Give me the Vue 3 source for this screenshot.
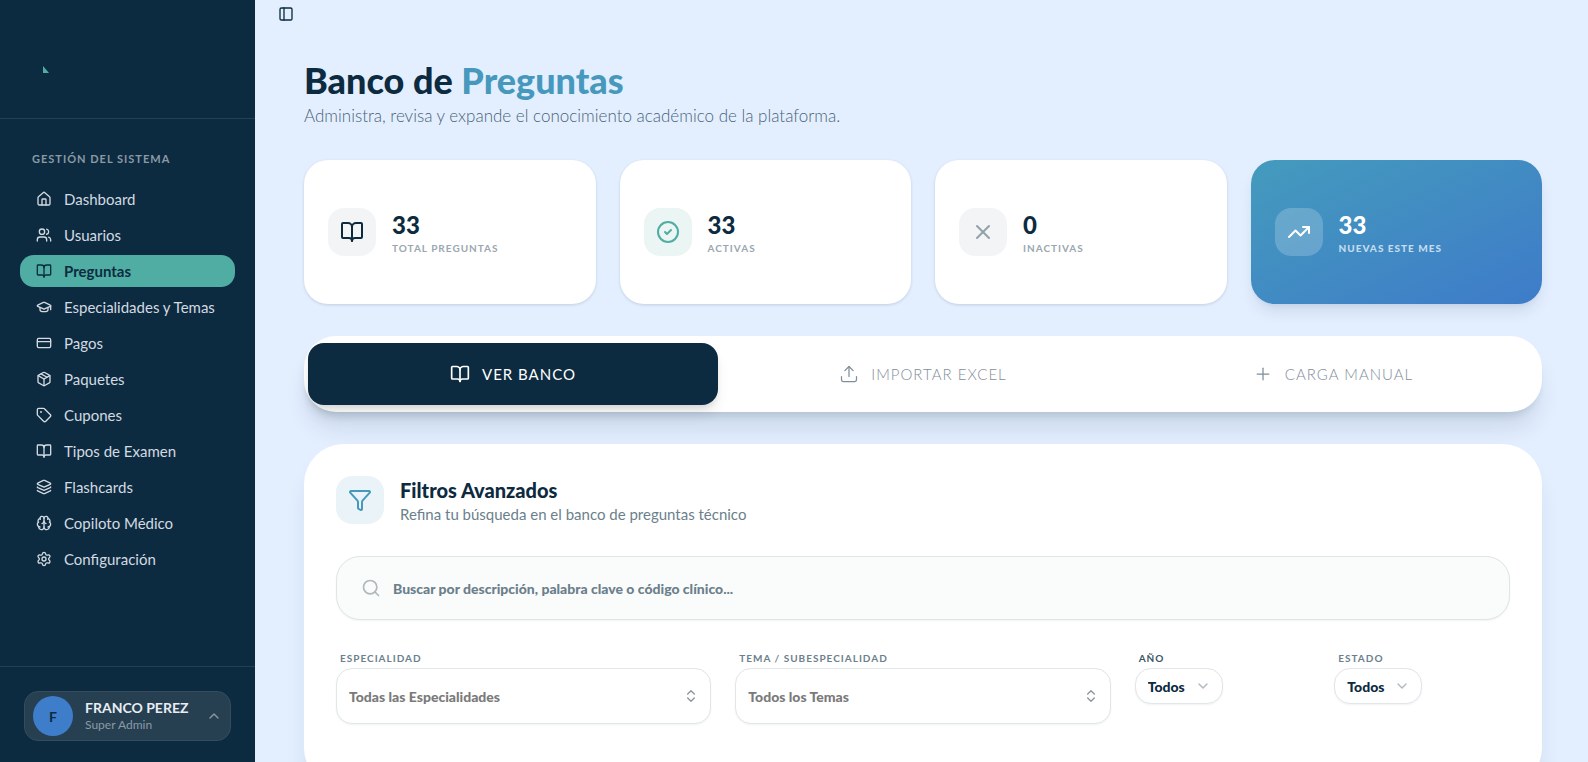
<script setup>
import { ref } from 'vue'

const icons = {
  panel: ['M5 3h14a2 2 0 0 1 2 2v14a2 2 0 0 1-2 2H5a2 2 0 0 1-2-2V5a2 2 0 0 1 2-2z', 'M9 3v18'],
  home: [
    'M15 21v-8a1 1 0 0 0-1-1h-4a1 1 0 0 0-1 1v8',
    'M3 10a2 2 0 0 1 .709-1.528l7-5.999a2 2 0 0 1 2.582 0l7 5.999A2 2 0 0 1 21 10v9a2 2 0 0 1-2 2H5a2 2 0 0 1-2-2z'
  ],
  users: [
    'M16 21v-2a4 4 0 0 0-4-4H6a4 4 0 0 0-4 4v2',
    'M5 7a4 4 0 1 0 8 0a4 4 0 1 0-8 0',
    'M22 21v-2a4 4 0 0 0-3-3.87',
    'M16 3.128a4 4 0 0 1 0 7.744'
  ],
  book: [
    'M12 7v14',
    'M3 18a1 1 0 0 1-1-1V4a1 1 0 0 1 1-1h5a4 4 0 0 1 4 4 4 4 0 0 1 4-4h5a1 1 0 0 1 1 1v13a1 1 0 0 1-1 1h-6a3 3 0 0 0-3 3 3 3 0 0 0-3-3z'
  ],
  cap: [
    'M21.42 10.922a1 1 0 0 0-.019-1.838L12.83 5.18a2 2 0 0 0-1.66 0L2.6 9.08a1 1 0 0 0 0 1.832l8.57 3.908a2 2 0 0 0 1.66 0z',
    'M22 10v6',
    'M6 12.5V16a6 3 0 0 0 12 0v-3.5'
  ],
  card: ['M4 5h16a2 2 0 0 1 2 2v10a2 2 0 0 1-2 2H4a2 2 0 0 1-2-2V7a2 2 0 0 1 2-2z', 'M2 10h20'],
  box: [
    'M11 21.73a2 2 0 0 0 2 0l7-4A2 2 0 0 0 21 16V8a2 2 0 0 0-1-1.73l-7-4a2 2 0 0 0-2 0l-7 4A2 2 0 0 0 3 8v8a2 2 0 0 0 1 1.73z',
    'M12 22V12',
    'M3.29 7 12 12l8.71-5',
    'm7.5 4.27 9 5.15'
  ],
  tag: [
    'M12.586 2.586A2 2 0 0 0 11.172 2H4a2 2 0 0 0-2 2v7.172a2 2 0 0 0 .586 1.414l8.704 8.704a2.426 2.426 0 0 0 3.42 0l6.58-6.58a2.426 2.426 0 0 0 0-3.42z',
    'M7 7.5a.5.5 0 1 0 1 0a.5.5 0 1 0-1 0'
  ],
  layers: [
    'M12.83 2.18a2 2 0 0 0-1.66 0L2.6 6.08a1 1 0 0 0 0 1.83l8.58 3.91a2 2 0 0 0 1.66 0l8.58-3.9a1 1 0 0 0 0-1.83z',
    'M2 12a1 1 0 0 0 .58.91l8.6 3.91a2 2 0 0 0 1.65 0l8.58-3.9A1 1 0 0 0 22 12',
    'M2 17a1 1 0 0 0 .58.91l8.6 3.91a2 2 0 0 0 1.65 0l8.58-3.9A1 1 0 0 0 22 17'
  ],
  brain: [
    'M12 18V5',
    'M15 13a4.17 4.17 0 0 1-3-4 4.17 4.17 0 0 1-3 4',
    'M17.598 6.5A3 3 0 1 0 12 5a3 3 0 1 0-5.598 1.5',
    'M17.997 5.125a4 4 0 0 1 2.526 5.77',
    'M18 18a4 4 0 0 0 2-7.464',
    'M19.967 17.483A4 4 0 1 1 12 18a4 4 0 1 1-7.967-.517',
    'M6 18a4 4 0 0 1-2-7.464',
    'M6.003 5.125a4 4 0 0 0-2.526 5.77'
  ],
  gear: [
    'M9.671 4.136a2.34 2.34 0 0 1 4.659 0 2.34 2.34 0 0 0 3.319 1.915 2.34 2.34 0 0 1 2.33 4.033 2.34 2.34 0 0 0 0 3.831 2.34 2.34 0 0 1-2.33 4.033 2.34 2.34 0 0 0-3.319 1.915 2.34 2.34 0 0 1-4.659 0 2.34 2.34 0 0 0-3.32-1.915 2.34 2.34 0 0 1-2.33-4.033 2.34 2.34 0 0 0 0-3.831A2.34 2.34 0 0 1 6.35 6.051a2.34 2.34 0 0 0 3.319-1.915',
    'M9 12a3 3 0 1 0 6 0a3 3 0 1 0-6 0'
  ],
  check: ['M2 12a10 10 0 1 0 20 0a10 10 0 1 0-20 0', 'm9 12 2 2 4-4'],
  close: ['M18 6 6 18', 'm6 6 12 12'],
  trend: ['M16 7h6v6', 'm22 7-8.5 8.5-5-5L2 17'],
  upload: ['M12 3v12', 'm17 8-5-5-5 5', 'M21 15v4a2 2 0 0 1-2 2H5a2 2 0 0 1-2-2v-4'],
  plus: ['M5 12h14', 'M12 5v14'],
  funnel: [
    'M10 20a1 1 0 0 0 .553.895l2 1A1 1 0 0 0 14 21v-7a2 2 0 0 1 .517-1.341L21.74 4.67A1 1 0 0 0 21 3H3a1 1 0 0 0-.742 1.67l7.225 7.989A2 2 0 0 1 10 14z'
  ],
  search: ['m21 21-4.34-4.34', 'M3 11a8 8 0 1 0 16 0a8 8 0 1 0-16 0'],
  up: ['m18 15-6-6-6 6'],
  down: ['m6 9 6 6 6-6'],
  updown: ['m7 15 5 5 5-5', 'm7 9 5-5 5 5']
}

const menu = [
  { label: 'Dashboard', icon: 'home' },
  { label: 'Usuarios', icon: 'users' },
  { label: 'Preguntas', icon: 'book' },
  { label: 'Especialidades y Temas', icon: 'cap' },
  { label: 'Pagos', icon: 'card' },
  { label: 'Paquetes', icon: 'box' },
  { label: 'Cupones', icon: 'tag' },
  { label: 'Tipos de Examen', icon: 'book' },
  { label: 'Flashcards', icon: 'layers' },
  { label: 'Copiloto Médico', icon: 'brain' },
  { label: 'Configuración', icon: 'gear' }
]

const stats = [
  { value: 33, label: 'Total preguntas', icon: 'book', tone: 'navy' },
  { value: 33, label: 'Activas', icon: 'check', tone: 'green' },
  { value: 0, label: 'Inactivas', icon: 'close', tone: 'gray' },
  { value: 33, label: 'Nuevas este mes', icon: 'trend', tone: 'accent' }
]

const tabs = [
  { id: 'banco', label: 'Ver banco', icon: 'book' },
  { id: 'excel', label: 'Importar Excel', icon: 'upload' },
  { id: 'manual', label: 'Carga manual', icon: 'plus' }
]

const filters = [
  { id: 'especialidad', label: 'Especialidad', option: 'Todas las Especialidades', wide: true },
  { id: 'tema', label: 'Tema / Subespecialidad', option: 'Todos los Temas', wide: true },
  { id: 'anio', label: 'Año', option: 'Todos', dark: true },
  { id: 'estado', label: 'Estado', option: 'Todos' }
]

const activePage = ref('Preguntas')
const activeTab = ref('banco')
const search = ref('')
const collapsed = ref(false)
</script>

<template>
  <div class="layout">
    <aside v-show="!collapsed" class="sidebar">
      <div class="brand">
        <svg class="logo" viewBox="0 0 6 7"><path d="M0 0 6 7H0z" /></svg>
      </div>
      <nav class="nav">
        <h2 class="nav-title">Gestión del sistema</h2>
        <a
          v-for="item in menu"
          :key="item.label"
          href="#"
          class="nav-item"
          :class="{ active: item.label === activePage }"
          @click.prevent="activePage = item.label"
        >
          <svg class="icon icon-sm" viewBox="0 0 24 24"><path v-for="d in icons[item.icon]" :key="d" :d="d" /></svg>
          <span>{{ item.label }}</span>
        </a>
      </nav>
      <div class="sidebar-footer">
        <button type="button" class="user">
          <span class="avatar">F</span>
          <span class="user-info">
            <span class="user-name">FRANCO PEREZ</span>
            <span class="user-role">Super Admin</span>
          </span>
          <svg class="icon icon-sm" viewBox="0 0 24 24"><path v-for="d in icons.up" :key="d" :d="d" /></svg>
        </button>
      </div>
    </aside>

    <main class="main">
      <header class="topbar">
        <button type="button" class="toggle" aria-label="Menú" @click="collapsed = !collapsed">
          <svg class="icon icon-sm" viewBox="0 0 24 24"><path v-for="d in icons.panel" :key="d" :d="d" /></svg>
        </button>
      </header>

      <div class="content">
        <div class="heading">
          <h1>Banco de <span>Preguntas</span></h1>
          <p>Administra, revisa y expande el conocimiento académico de la plataforma.</p>
        </div>

        <section class="stats">
          <article v-for="stat in stats" :key="stat.label" class="stat" :class="stat.tone">
            <div class="tile">
              <svg class="icon icon-lg" viewBox="0 0 24 24"><path v-for="d in icons[stat.icon]" :key="d" :d="d" /></svg>
            </div>
            <div>
              <div class="stat-value">{{ stat.value }}</div>
              <div class="stat-label">{{ stat.label }}</div>
            </div>
          </article>
        </section>

        <div class="tabs">
          <button
            v-for="tab in tabs"
            :key="tab.id"
            type="button"
            class="tab"
            :class="{ active: tab.id === activeTab }"
            @click="activeTab = tab.id"
          >
            <svg class="icon icon-md" viewBox="0 0 24 24"><path v-for="d in icons[tab.icon]" :key="d" :d="d" /></svg>
            <span>{{ tab.label }}</span>
          </button>
        </div>

        <section class="panel">
          <div class="panel-head">
            <div class="tile">
              <svg class="icon icon-lg" viewBox="0 0 24 24"><path v-for="d in icons.funnel" :key="d" :d="d" /></svg>
            </div>
            <div>
              <h2>Filtros Avanzados</h2>
              <p>Refina tu búsqueda en el banco de preguntas técnico</p>
            </div>
          </div>

          <label class="search">
            <svg class="icon icon-md" viewBox="0 0 24 24"><path v-for="d in icons.search" :key="d" :d="d" /></svg>
            <input
              v-model="search"
              type="text"
              aria-label="Buscar"
              placeholder="Buscar por descripción, palabra clave o código clínico..."
            />
          </label>

          <div class="filters">
            <div v-for="filter in filters" :key="filter.id" class="field" :class="{ wide: filter.wide, dark: filter.dark }">
              <label :for="filter.id">{{ filter.label }}</label>
              <div class="select">
                <select :id="filter.id">
                  <option>{{ filter.option }}</option>
                </select>
                <svg class="icon icon-sm" viewBox="0 0 24 24">
                  <path v-for="d in icons[filter.wide ? 'updown' : 'down']" :key="d" :d="d" />
                </svg>
              </div>
            </div>
          </div>
        </section>
      </div>
    </main>
  </div>
</template>

<style>
body {
  margin: 0;
  background: #e3efff;
}
</style>

<style scoped>
.layout {
  display: flex;
  height: 100vh;
  overflow: hidden;
  background: #e3efff;
  color: #0d2b40;
  font-family: Lato, 'Open Sans', sans-serif;
}

h1,
h2,
p {
  margin: 0;
}

button,
input,
select {
  font-family: inherit;
  color: inherit;
}

button {
  border: none;
  cursor: pointer;
}

.icon {
  flex-shrink: 0;
  fill: none;
  stroke: currentColor;
  stroke-width: 2;
  stroke-linecap: round;
  stroke-linejoin: round;
}

.icon-sm {
  width: 16px;
  height: 16px;
}

.icon-md {
  width: 20px;
  height: 20px;
}

.icon-lg {
  width: 24px;
  height: 24px;
}

.sidebar {
  display: flex;
  flex-direction: column;
  flex-shrink: 0;
  width: 255px;
  background: #0d2b40;
  color: #d3dae0;
}

.brand {
  box-sizing: border-box;
  height: 119px;
  padding: 66px 43px 0;
  border-bottom: 1px solid #25404f;
}

.logo {
  display: block;
  width: 6px;
  height: 7px;
  fill: #4fada3;
}

.nav {
  display: flex;
  flex: 1;
  flex-direction: column;
  gap: 4px;
  padding: 24px 20px;
}

.nav-title {
  margin-bottom: 4px;
  padding: 0 12px;
  font-size: 11px;
  font-weight: 700;
  line-height: 32px;
  letter-spacing: 1px;
  text-transform: uppercase;
  color: #8a9aa5;
}

.nav-item {
  display: flex;
  align-items: center;
  gap: 12px;
  height: 32px;
  padding: 0 16px;
  border-radius: 14px;
  font-size: 15px;
  color: inherit;
  text-decoration: none;
  white-space: nowrap;
}

.nav-item.active {
  background: #4fada3;
  color: #0d2b40;
  font-weight: 700;
}

.sidebar-footer {
  padding: 24px 24px 21px;
  border-top: 1px solid #25404f;
}

.user {
  display: flex;
  align-items: center;
  gap: 12px;
  width: 100%;
  height: 50px;
  padding: 0 8px;
  border: 1px solid #344c5c;
  border-radius: 14px;
  background: #264052;
  color: #8a9aa5;
  text-align: left;
}

.avatar {
  display: flex;
  align-items: center;
  justify-content: center;
  width: 40px;
  height: 40px;
  border-radius: 50%;
  background: #3e7dca;
  color: #0d2b40;
  font-size: 14px;
  font-weight: 700;
}

.user-info {
  display: flex;
  flex: 1;
  flex-direction: column;
}

.user-name {
  font-size: 14px;
  font-weight: 700;
  line-height: 18px;
  color: #e8edf3;
}

.user-role {
  font-size: 12px;
  line-height: 16px;
}

.main {
  flex: 1;
  min-width: 0;
  overflow: hidden;
}

.topbar {
  display: flex;
  align-items: center;
  height: 28px;
  padding: 0 23px;
}

.toggle {
  display: flex;
  padding: 0;
  background: none;
}

.content {
  display: flex;
  flex-direction: column;
  gap: 32px;
  padding: 32px 46px 32px 49px;
}

h1 {
  font-size: 36px;
  font-weight: 900;
  line-height: 40px;
}

h1 span {
  color: #4699bd;
}

.heading p {
  margin-top: 4px;
  font-size: 17px;
  font-weight: 300;
  line-height: 24px;
  color: #4a6376;
}

.stats {
  display: grid;
  grid-template-columns: repeat(4, 1fr);
  gap: 24px;
}

.stat {
  display: flex;
  align-items: center;
  gap: 16px;
  height: 144px;
  box-sizing: border-box;
  padding: 0 24px;
  border-radius: 24px;
  background: #fff;
  box-shadow: 0 1px 3px rgba(13, 43, 64, 0.16);
}

.tile {
  display: flex;
  align-items: center;
  justify-content: center;
  flex-shrink: 0;
  width: 48px;
  height: 48px;
  border-radius: 16px;
  background: #f2f4f6;
}

.stat-value {
  font-size: 24px;
  font-weight: 900;
  line-height: 32px;
}

.stat-label {
  font-size: 10px;
  font-weight: 700;
  line-height: 15px;
  letter-spacing: 1px;
  text-transform: uppercase;
  color: #9aa7af;
}

.green .tile {
  background: #ebf5f4;
  color: #4fada3;
}

.gray .tile {
  color: #93a0a8;
}

.accent {
  background: linear-gradient(to bottom right, #449bbd, #3e7bc9);
  box-shadow: 0 10px 15px -3px rgba(13, 43, 64, 0.1), 0 4px 6px -4px rgba(13, 43, 64, 0.1);
  color: #fff;
}

.accent .tile {
  background: rgba(255, 255, 255, 0.2);
}

.accent .stat-label {
  font-weight: 900;
  color: #c4dcee;
}

.tabs {
  display: grid;
  grid-template-columns: repeat(3, 1fr);
  height: 76px;
  box-sizing: border-box;
  padding: 7px 4px;
  border-radius: 32px;
  background: #fff;
  box-shadow: 0 20px 25px -5px rgba(13, 43, 64, 0.12), 0 8px 10px -6px rgba(13, 43, 64, 0.16);
}

.tab {
  display: flex;
  align-items: center;
  justify-content: center;
  gap: 12px;
  border-radius: 16px;
  background: none;
  font-size: 15px;
  font-weight: 300;
  letter-spacing: 1px;
  text-transform: uppercase;
  color: #7f8e98;
}

.tab .icon {
  stroke-width: 1.5;
}

.tab.active {
  background: #0d2b40;
  box-shadow: 0 10px 15px -3px rgba(0, 0, 0, 0.1), 0 4px 6px -2px rgba(0, 0, 0, 0.1);
  color: #fff;
  font-weight: 400;
}

.tab.active .icon {
  stroke-width: 2;
}

.panel {
  padding: 32px 32px 64px;
  border-radius: 40px;
  background: #fff;
  box-shadow: 0 20px 25px -5px rgba(13, 43, 64, 0.1);
}

.panel-head {
  display: flex;
  align-items: center;
  gap: 16px;
}

.panel-head .tile {
  background: #eaf3f7;
  color: #4699bd;
}

.panel-head h2 {
  font-size: 20px;
  font-weight: 900;
  line-height: 28px;
}

.panel-head p {
  font-size: 15px;
  line-height: 20px;
  color: #6b7f8c;
}

.search {
  display: flex;
  align-items: center;
  gap: 12px;
  height: 64px;
  box-sizing: border-box;
  margin: 32px 0 30px;
  padding: 0 24px;
  border: 1px solid #dfe4e6;
  border-radius: 24px;
  background: #fafcfb;
  box-shadow: 0 1px 2px rgba(13, 43, 64, 0.06);
  color: #b0b8bd;
}

.search input {
  flex: 1;
  border: none;
  outline: none;
  padding: 0;
  background: none;
  font-size: 14px;
  font-weight: 900;
  color: #0d2b40;
}

.search input::placeholder {
  color: #6b7f8c;
  opacity: 1;
}

.filters {
  display: grid;
  grid-template-columns: repeat(6, 1fr);
  gap: 24px;
}

.field {
  display: flex;
  flex-direction: column;
  align-items: flex-start;
  gap: 2px;
}

.field.wide {
  grid-column: span 2;
}

.field label {
  padding: 0 4px;
  font-size: 10px;
  font-weight: 700;
  line-height: 16px;
  letter-spacing: 1px;
  text-transform: uppercase;
  color: #6b7f8c;
}

.field.dark label {
  color: #3d5566;
}

.select {
  position: relative;
}

.select select {
  height: 36px;
  padding: 0 36px 0 12px;
  border: 1px solid #e1e6e9;
  border-radius: 16px;
  appearance: none;
  background: #fff;
  box-shadow: 0 1px 2px rgba(13, 43, 64, 0.06);
  font-size: 14px;
  font-weight: 900;
}

.select .icon {
  position: absolute;
  top: 50%;
  right: 12px;
  transform: translateY(-50%);
  pointer-events: none;
  color: #b0b8bd;
}

.wide .select,
.wide select {
  width: 100%;
}

.wide .select select {
  height: 56px;
  color: #7a7a7a;
}

.wide .select .icon {
  color: #8a969d;
}
</style>
